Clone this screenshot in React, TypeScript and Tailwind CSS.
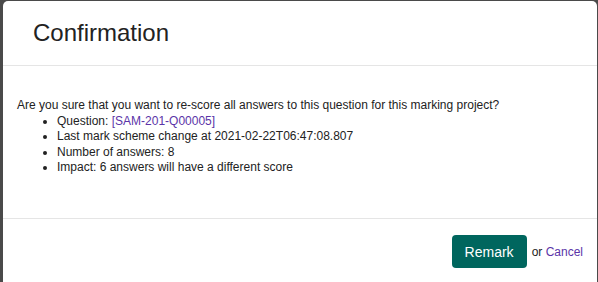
import React from 'react';

const App: React.FC = () => {
  return (
    <div
      className="w-[598px] h-[282px] bg-[#4a4a4a] pl-[3px] pr-[1px] pt-[1px] overflow-hidden"
      style={{ fontFamily: '"Liberation Sans", Arial, sans-serif' }}
    >
      <div className="bg-white rounded-[5px] h-[286px] text-[#222]">
        {/* Header */}
        <div className="h-[65px] border-b border-[#e5e5e5] flex items-center px-[30px]">
          <h1 className="text-[24px] leading-none text-[#222]">Confirmation</h1>
        </div>

        {/* Body */}
        <div className="h-[153px] border-b border-[#e5e5e5] pl-[14px] pt-[32px] text-[12px] leading-[15.5px]">
          <p>Are you sure that you want to re-score all answers to this question for this marking project?</p>
          <ul className="list-disc pl-[40px]">
            <li>
              Question: <a className="text-[#5b34a8]">[SAM-201-Q00005]</a>
            </li>
            <li>Last mark scheme change at 2021-02-22T06:47:08.807</li>
            <li>Number of answers: 8</li>
            <li>Impact: 6 answers will have a different score</li>
          </ul>
        </div>

        {/* Footer */}
        <div className="flex justify-end items-center pt-[16px] pr-[14px] text-[12px]">
          <button className="h-[33px] px-[13px] rounded-[4px] bg-[#00665e] text-white text-[14px] leading-none">
            Remark
          </button>
          <span className="ml-[5px]">
            or <a className="text-[#5b34a8]">Cancel</a>
          </span>
        </div>
      </div>
    </div>
  );
};

export default App;
